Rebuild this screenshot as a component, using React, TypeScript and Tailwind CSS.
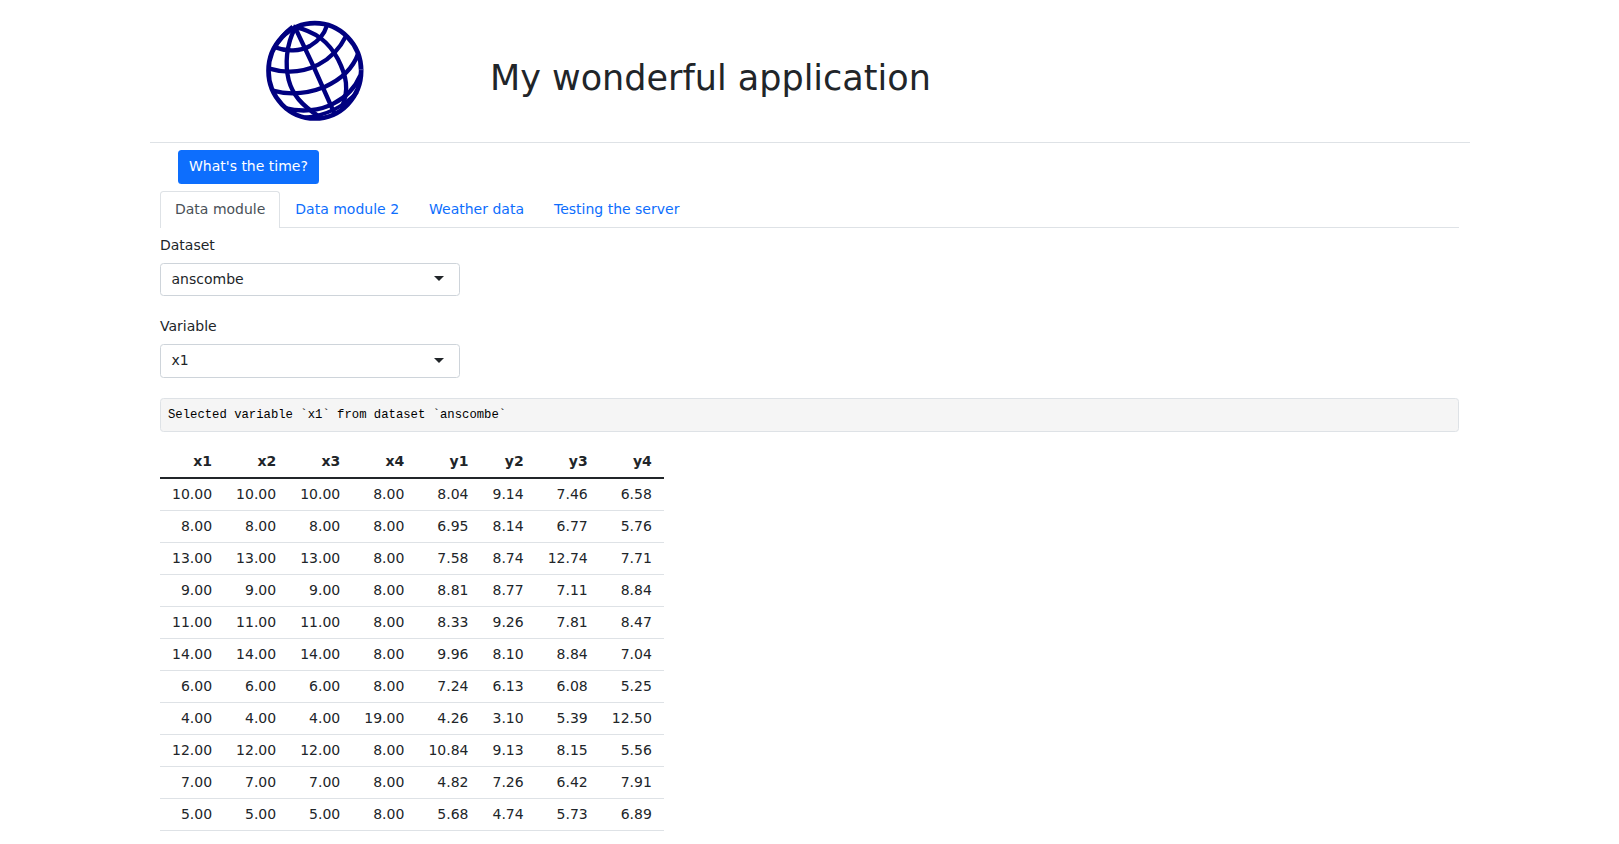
import React from "react";

const columns = ["x1", "x2", "x3", "x4", "y1", "y2", "y3", "y4"];

const rows = [
  ["10.00", "10.00", "10.00", "8.00", "8.04", "9.14", "7.46", "6.58"],
  ["8.00", "8.00", "8.00", "8.00", "6.95", "8.14", "6.77", "5.76"],
  ["13.00", "13.00", "13.00", "8.00", "7.58", "8.74", "12.74", "7.71"],
  ["9.00", "9.00", "9.00", "8.00", "8.81", "8.77", "7.11", "8.84"],
  ["11.00", "11.00", "11.00", "8.00", "8.33", "9.26", "7.81", "8.47"],
  ["14.00", "14.00", "14.00", "8.00", "9.96", "8.10", "8.84", "7.04"],
  ["6.00", "6.00", "6.00", "8.00", "7.24", "6.13", "6.08", "5.25"],
  ["4.00", "4.00", "4.00", "19.00", "4.26", "3.10", "5.39", "12.50"],
  ["12.00", "12.00", "12.00", "8.00", "10.84", "9.13", "8.15", "5.56"],
  ["7.00", "7.00", "7.00", "8.00", "4.82", "7.26", "6.42", "7.91"],
  ["5.00", "5.00", "5.00", "8.00", "5.68", "4.74", "5.73", "6.89"],
];

const tabs = ["Data module", "Data module 2", "Weather data", "Testing the server"];

function Globe() {
  return (
    <svg width="130" height="120" viewBox="0 0 390 360" fill="none" stroke="#000080" strokeWidth="13">
      <ellipse cx="194.5" cy="182.5" rx="139" ry="143" strokeWidth="14" />
      <path d="M128 50C104 68 86 90 74 114" strokeWidth="12" />
      <path d="M135 55C108 105 105 165 116 210C128 255 155 285 205 318" />
      <path d="M134 50L190 168L254 312" />
      <path d="M130 50C200 65 238 98 264 148C288 195 300 240 274 294" />
      <path d="M75 112C110 126 150 124 180 108C207 92 222 75 231 46" />
      <path d="M55 175C105 190 160 187 205 164C245 143 270 115 287 80" />
      <path d="M68 242C120 256 175 250 225 230C275 208 310 172 325 130" />
      <path d="M105 294C155 308 210 302 250 281C285 263 316 232 331 196" />
      <path d="M165 322C215 318 270 302 322 245" strokeWidth="11" />
      <path d="M328 179H341" stroke="#7070b8" strokeWidth="2" />
    </svg>
  );
}

type SelectProps = { label: string; value: string; className: string; caretClassName?: string };

function Select({ label, value, className, caretClassName }: SelectProps) {
  return (
    <div className="flex w-[300px] flex-col pb-[20px]">
      <label className="mb-[7px] leading-[21px]">{label}</label>
      <button
        className={`flex items-center justify-between rounded-[3.5px] border border-[#ced4da] pr-[15px] pl-[10.5px] ${className}`}
      >
        <span>{value}</span>
        <svg className={caretClassName} width="10" height="5" viewBox="0 0 10 5" fill="#212529">
          <path d="M0 0H10L5 5Z" />
        </svg>
      </button>
    </div>
  );
}

export default function App() {
  return (
    <div className="h-[844px] overflow-hidden bg-white font-['DejaVu_Sans',sans-serif] text-[14px] leading-[21px] text-[#212529]">
      <div className="mx-auto w-[1320px]">
        <header className="flex h-[143px] border-b border-[#dee2e6] pt-[10px]">
          <div className="w-[340.5px] pl-[100.5px]">
            <Globe />
          </div>
          <h1 className="pt-[47px] text-[35px] leading-[42px] font-medium">My wonderful application</h1>
        </header>
        <main className="px-[10.5px]">
          <div className="pt-[7px] pl-[17.5px]">
            <button className="h-[34px] rounded-[3.5px] bg-[#0d6efd] px-[11.5px] pb-[2px] text-white">What's the time?</button>
          </div>
          <nav className="mt-[7px] flex h-[37px] border-b border-[#dee2e6]">
            {tabs.map((tab, i) => (
              <a
                key={tab}
                className={
                  i === 0
                    ? "h-[37px] rounded-t-[3.5px] border border-b-0 border-[#dee2e6] bg-white px-[14px] pt-[7px] text-[#495057]"
                    : "h-[37px] px-[15px] pt-[8px] text-[#0d6efd]"
                }
              >
                {tab}
              </a>
            ))}
          </nav>
          <div className="pt-[7px]">
            <Select label="Dataset" value="anscombe" className="h-[33px]" caretClassName="mb-[2px]" />
            <Select label="Variable" value="x1" className="h-[34px] pb-[2px]" />
          </div>
          <pre className="h-[34px] rounded-[3.5px] border border-[#dee2e6] bg-[#f5f5f5] px-[7px] pt-[7px] font-['Liberation_Mono',monospace] text-[12.25px] leading-[18.4px] text-black">
            Selected variable `x1` from dataset `anscombe`
          </pre>
          <table className="mt-[14px] border-collapse text-right">
            <thead>
              <tr className="h-[32px] border-b-2 border-[#212529]">
                {columns.map((c) => (
                  <th key={c} className="px-[12px] py-0 font-bold">
                    {c}
                  </th>
                ))}
              </tr>
            </thead>
            <tbody>
              {rows.map((row) => (
                <tr key={row[0]} className="h-[32px] border-b border-[#dee2e6]">
                  {row.map((v, i) => (
                    <td key={columns[i]} className="px-[12px] py-0">
                      {v}
                    </td>
                  ))}
                </tr>
              ))}
            </tbody>
          </table>
        </main>
      </div>
    </div>
  );
}
